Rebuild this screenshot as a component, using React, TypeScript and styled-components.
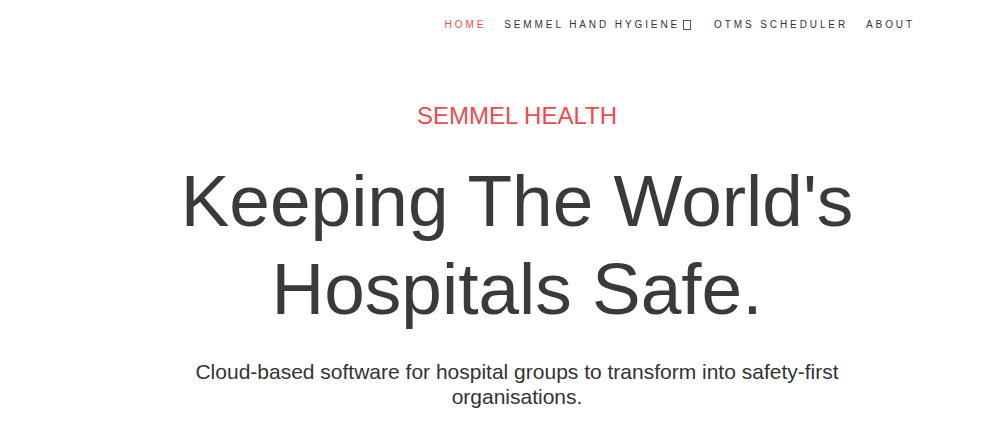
import * as React from 'react';
import styled, { createGlobalStyle } from 'styled-components';

const navItems = [
    { label: 'HOME', active: true },
    { label: 'SEMMEL HAND HYGIENE', dropdown: true },
    { label: 'OTMS SCHEDULER' },
    { label: 'ABOUT' },
];

const App = () => {
    return (
        <>
            <GlobalStyle />
            <Page>
                <Header>
                    <Nav>
                        {navItems.map(item => (
                            <NavLink key={item.label} active={!!item.active}>
                                {item.label}
                                {item.dropdown && <Caret />}
                            </NavLink>
                        ))}
                    </Nav>
                </Header>
                <Hero>
                    <Kicker>SEMMEL HEALTH</Kicker>
                    <Title>Keeping The World's<br />Hospitals Safe.</Title>
                    <Lead>Cloud-based software for hospital groups to transform into safety-first organisations.</Lead>
                </Hero>
            </Page>
        </>
    );
};

export default App;


/** styles below */

const GlobalStyle = createGlobalStyle`
    html, body {
        margin: 0;
        padding: 0;
        background: #ffffff;
        font-family: "Liberation Sans", Arial, sans-serif;
        color: #333333;
    }
`;

const Page = styled.div`
    width: 1000px;
    height: 444px;
    overflow: hidden;
`;

const Header = styled.header`
    display: flex;
    justify-content: flex-end;
    padding: 19px 85px 0 0;
`;

const Nav = styled.nav`
    display: flex;
    gap: 18px;
`;

const NavLink = styled.a<{ active: boolean }>`
    display: flex;
    align-items: center;
    font-size: 10px;
    line-height: 12px;
    letter-spacing: 2.9px;
    color: ${p => (p.active ? '#f04a4a' : '#333333')};
    cursor: pointer;
`;

const Caret = styled.span`
    display: inline-block;
    width: 6px;
    height: 8px;
    border: 1px solid #555555;
    margin: 0 5px 0 3px;
`;

const Hero = styled.section`
    display: flex;
    flex-direction: column;
    align-items: center;
    text-align: center;
    padding: 65px 0 0 34px;
`;

const Kicker = styled.div`
    font-size: 24px;
    color: #ef4b4b;
    line-height: 40px;
`;

const Title = styled.h1`
    margin: 21px 0 0;
    font-size: 73px;
    font-weight: 400;
    line-height: 88px;
    color: #3a3a3a;
`;

const Lead = styled.p`
    margin: 26px 0 0;
    width: 700px;
    font-size: 21px;
    line-height: 25px;
    color: #333333;
`;
